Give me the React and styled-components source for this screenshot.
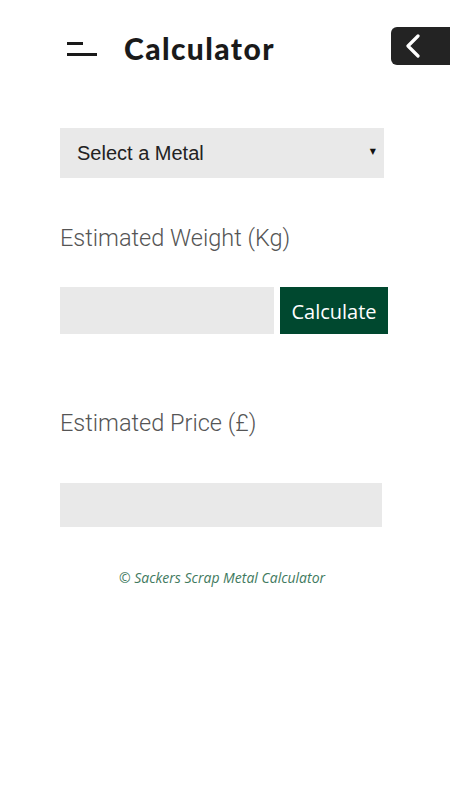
import React, { useState } from 'react';
import styled, { createGlobalStyle } from 'styled-components';

const GlobalStyle = createGlobalStyle`
    html, body {
        margin: 0;
        padding: 0;
        background: #ffffff;
        overflow-x: hidden;
    }
    * {
        box-sizing: border-box;
    }
`;

const Page = styled.div`
    width: 450px;
    min-height: 800px;
    overflow: hidden;
    background: #ffffff;
`;

const Header = styled.header`
    display: flex;
    align-items: center;
    height: 38px;
    margin-top: 27px;
    padding-left: 67px;
`;

const MenuButton = styled.button`
    display: flex;
    flex-direction: column;
    align-items: flex-start;
    gap: 8.5px;
    width: 30px;
    padding: 0;
    margin-top: 6px;
    border: none;
    background: transparent;
    cursor: pointer;
`;

const MenuLine = styled.span`
    display: block;
    width: ${(p) => p.$width}px;
    height: 2.5px;
    background: #1a1a1a;
`;

const Titulo = styled.h1`
    margin: 4px 0 0 27px;
    font-family: 'Lato', 'Noto Sans', sans-serif;
    font-weight: 900;
    font-size: 30px;
    color: #1a1a1a;
    letter-spacing: 1.4px;
`;

const BackButton = styled.button`
    display: flex;
    align-items: center;
    justify-content: flex-start;
    margin-left: auto;
    margin-right: -20px;
    width: 79px;
    height: 38px;
    padding-left: 13px;
    border: none;
    border-radius: 6px;
    background: #232323;
    cursor: pointer;
`;

const Main = styled.main`
    display: flex;
    flex-direction: column;
    width: 328px;
    margin-left: 60px;
    margin-top: 63px;
`;

const SelectWrap = styled.div`
    position: relative;
    width: 324px;
`;

const Select = styled.select`
    width: 100%;
    height: 50px;
    padding: 0 0 0 17px;
    border: none;
    border-radius: 0;
    outline: none;
    appearance: none;
    background: #e9e9e9;
    color: #222;
    font-family: 'Liberation Sans', Arial, sans-serif;
    font-size: 20px;
`;

const Flecha = styled.span`
    position: absolute;
    right: 8px;
    top: 19px;
    font-family: 'DejaVu Sans', sans-serif;
    font-size: 8px;
    line-height: 10px;
    color: #111;
    pointer-events: none;
`;

const Label = styled.label`
    display: block;
    margin-top: ${(p) => p.$top}px;
    font-family: 'Roboto', sans-serif;
    font-weight: 300;
    font-size: 23.5px;
    line-height: 28px;
    color: #555;
`;

const Fila = styled.div`
    display: flex;
    gap: 6px;
    margin-top: 35px;
`;

const Input = styled.input`
    width: 214px;
    height: 47px;
    border: none;
    outline: none;
    background: #e9e9e9;
    padding: 0 10px;
    font-family: 'Roboto', sans-serif;
    font-size: 18px;
`;

const BotonCalcular = styled.button`
    width: 108px;
    height: 47px;
    border: none;
    background: #00482f;
    color: #ffffff;
    font-family: 'Open Sans', sans-serif;
    font-size: 20px;
    padding: 2px 0 0;
    cursor: pointer;
`;

const Resultado = styled.div`
    width: 322px;
    height: 44px;
    margin-top: 46px;
    background: #e9e9e9;
`;

const Footer = styled.p`
    width: 324px;
    margin: 41px 0 0;
    text-align: center;
    font-family: 'Open Sans', sans-serif;
    font-style: italic;
    font-size: 14px;
    line-height: 19px;
    color: #3f7a60;
`;

const App = () => {
    const [peso, setPeso] = useState('');
    const [metal, setMetal] = useState('');

    return (
        <Page>
            <GlobalStyle />
            <Header>
                <MenuButton aria-label="Menu">
                    <MenuLine $width={16} />
                    <MenuLine $width={30} />
                </MenuButton>
                <Titulo>Calculator</Titulo>
                <BackButton aria-label="Back">
                    <svg width="18" height="24" viewBox="0 0 18 24" fill="none">
                        <path d="M14 2 L4 12 L14 22" stroke="#ffffff" strokeWidth="3.2" strokeLinecap="round" strokeLinejoin="round" />
                    </svg>
                </BackButton>
            </Header>
            <Main>
                <SelectWrap>
                    <Select value={metal} onChange={(e) => setMetal(e.target.value)}>
                        <option value="">Select a Metal</option>
                        <option value="copper">Copper</option>
                        <option value="brass">Brass</option>
                        <option value="aluminium">Aluminium</option>
                    </Select>
                    <Flecha>▼</Flecha>
                </SelectWrap>
                <Label $top={46}>Estimated Weight (Kg)</Label>
                <Fila>
                    <Input type="text" value={peso} onChange={(e) => setPeso(e.target.value)} />
                    <BotonCalcular type="button">Calculate</BotonCalcular>
                </Fila>
                <Label $top={75}>Estimated Price (£)</Label>
                <Resultado />
                <Footer>© Sackers Scrap Metal Calculator</Footer>
            </Main>
        </Page>
    );
};

export default App;
